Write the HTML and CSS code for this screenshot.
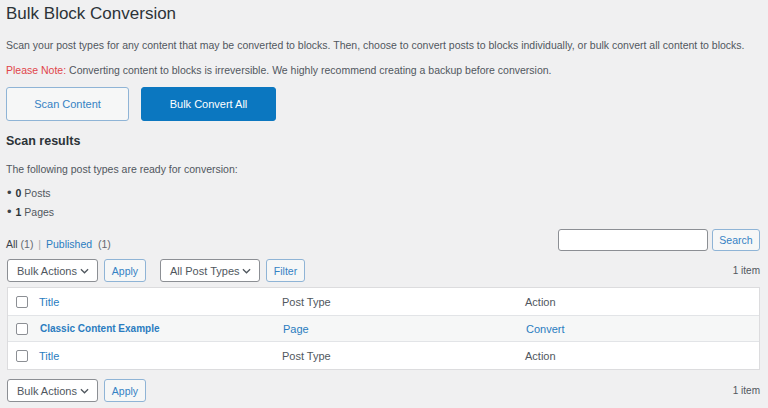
FILE: index.html
```html
<!DOCTYPE html>
<html>
<head>
<meta charset="utf-8">
<link rel="stylesheet" href="styles.css">
</head>
<body>
<div class="wrap">
  <h1 class="title">Bulk Block Conversion</h1>
  <p class="intro">Scan your post types for any content that may be converted to blocks. Then, choose to convert posts to blocks individually, or bulk convert all content to blocks.</p>
  <p class="intro note"><span class="warn">Please Note:</span> Converting content to blocks is irreversible. We highly recommend creating a backup before conversion.</p>
  <div class="actions">
    <button class="btn btn-secondary">Scan Content</button>
    <button class="btn btn-primary">Bulk Convert All</button>
  </div>
  <h2 class="subtitle">Scan results</h2>
  <p class="small">The following post types are ready for conversion:</p>
  <ul class="counts">
    <li><b>0</b> Posts</li>
    <li><b>1</b> Pages</li>
  </ul>
  <div class="filters-row">
    <div class="subsubsub"><span class="current">All</span> <span class="count">(1)</span> <span class="sep">|</span> <a class="link">Published</a>&nbsp; <span class="count">(1)</span></div>
    <div class="search">
      <span class="search-input"></span>
      <button class="small-btn search-btn">Search</button>
    </div>
  </div>
  <div class="tablenav top">
    <div class="tn-left">
      <span class="select w-bulk">Bulk Actions <svg class="chev" viewBox="0 0 10 6" width="9" height="6"><path d="M1 1l4 4 4-4" fill="none" stroke="#50575e" stroke-width="1.4"/></svg></span>
      <button class="small-btn w-apply">Apply</button>
      <span class="select w-types">All Post Types <svg class="chev" viewBox="0 0 10 6" width="9" height="6"><path d="M1 1l4 4 4-4" fill="none" stroke="#50575e" stroke-width="1.4"/></svg></span>
      <button class="small-btn w-filter">Filter</button>
    </div>
    <span class="items">1 item</span>
  </div>
  <div class="table">
    <div class="row head">
      <span class="cb"><span class="box"></span></span>
      <span class="c-title link">Title</span>
      <span class="c-type">Post Type</span>
      <span class="c-action">Action</span>
    </div>
    <div class="row alt">
      <span class="cb"><span class="box"></span></span>
      <span class="c-title link strong">Classic Content Example</span>
      <span class="c-type link">Page</span>
      <span class="c-action link">Convert</span>
    </div>
    <div class="row foot">
      <span class="cb"><span class="box"></span></span>
      <span class="c-title link">Title</span>
      <span class="c-type">Post Type</span>
      <span class="c-action">Action</span>
    </div>
  </div>
  <div class="tablenav bottom">
    <div class="tn-left">
      <span class="select w-bulk">Bulk Actions <svg class="chev" viewBox="0 0 10 6" width="9" height="6"><path d="M1 1l4 4 4-4" fill="none" stroke="#50575e" stroke-width="1.4"/></svg></span>
      <button class="small-btn w-apply">Apply</button>
    </div>
    <span class="items">1 item</span>
  </div>
</div>
</body>
</html>
```
FILE: styles.css
```css
html, body {
  margin: 0;
  padding: 0;
  background: #f0f0f1;
}
body {
  font-family: "Liberation Sans", Arial, sans-serif;
  color: #50575e;
  width: 768px;
  height: 408px;
  overflow: hidden;
}
.wrap {
  padding: 3px 8px 0 6px;
}
.title {
  margin: 0;
  font-size: 17px;
  font-weight: 400;
  line-height: 22px;
  color: #2c3338;
}
.intro {
  margin: 13px 0 0;
  font-size: 10.5px;
  line-height: 15px;
  color: #50575e;
}
.note {
  margin-top: 10px;
}
.warn {
  color: #e0454a;
}
.actions {
  display: flex;
  gap: 12px;
  margin-top: 9px;
}
.btn {
  font-family: inherit;
  height: 34px;
  border-radius: 3px;
  font-size: 11px;
  padding: 0;
  cursor: pointer;
}
.btn-secondary {
  width: 123px;
  background: #f6f7f7;
  border: 1px solid #8fb4d6;
  color: #3582c4;
}
.btn-primary {
  width: 135px;
  background: #0b77c0;
  border: 1px solid #0b77c0;
  color: #fff;
}
.subtitle {
  margin: 11px 0 0;
  font-size: 12.5px;
  font-weight: 700;
  line-height: 18px;
  color: #2c3338;
}
.small {
  margin: 12px 0 0;
  font-size: 10.5px;
  line-height: 14px;
}
.counts {
  list-style: none;
  margin: 10px 0 0;
  padding: 0;
  font-size: 10.5px;
  line-height: 14px;
}
.counts li {
  margin-bottom: 5px;
}
.counts li:last-child {
  margin-bottom: 0;
}
.counts li::before {
  content: "\2022";
  margin: 0 4px 0 1px;
  font-size: 13px;
  color: #3c434a;
}
.counts b {
  color: #2c3338;
}
.filters-row {
  display: flex;
  justify-content: space-between;
  align-items: flex-end;
  margin-top: 10px;
}
.subsubsub {
  font-size: 10.5px;
  line-height: 14px;
  color: #646970;
}
.subsubsub .current {
  color: #3c434a;
}
.subsubsub .sep {
  color: #a7aaad;
  margin: 0 2px;
}
.link {
  color: #2a7cc0;
}
.search {
  display: flex;
  gap: 4px;
}
.search-input {
  display: block;
  width: 148px;
  height: 20px;
  background: #fff;
  border: 1px solid #8c8f94;
  border-radius: 3px;
}
.small-btn {
  font-family: inherit;
  font-size: 10.5px;
  height: 23px;
  padding: 0 7px;
  background: #f6f7f7;
  border: 1px solid #8fb4d6;
  border-radius: 3px;
  color: #3582c4;
}
.search-btn {
  height: 22px;
  width: 48px;
  padding: 0;
}
.tablenav {
  display: flex;
  justify-content: space-between;
  align-items: center;
  height: 23px;
}
.tablenav.top {
  margin-top: 8px;
  padding-left: 1px;
}
.tablenav.bottom {
  margin-top: 9px;
  padding-left: 1px;
}
.tn-left {
  display: flex;
  align-items: center;
}
.select {
  box-sizing: border-box;
  display: flex;
  align-items: center;
  justify-content: space-between;
  height: 23px;
  padding: 0 8px 0 9px;
  font-size: 11px;
  color: #50575e;
  background: #fff;
  border: 1px solid #8c8f94;
  border-radius: 3px;
}
.w-bulk { width: 91px; }
.w-types { width: 100px; margin-left: 14px; }
.w-apply { width: 42px; margin-left: 6px; padding: 0; }
.w-filter { width: 39px; margin-left: 6px; padding: 0; }
.items {
  font-size: 10px;
  color: #50575e;
}
.table {
  margin: 5px 0 0 1px;
  background: #fff;
  border: 1px solid #dcdcde;
}
.row {
  box-sizing: border-box;
  display: flex;
  align-items: center;
  height: 27px;
  font-size: 11px;
  color: #50575e;
}
.row.alt {
  background: #f6f7f7;
  border-top: 1px solid #e2e4e7;
  border-bottom: 1px solid #e2e4e7;
}
.cb {
  width: 31px;
  padding-left: 8px;
  box-sizing: border-box;
  display: flex;
}
.box {
  display: block;
  width: 10px;
  height: 10px;
  border: 1px solid #8c8f94;
  border-radius: 2px;
  background: #fff;
}
.c-title { width: 243px; }
.c-type { width: 243px; }
.c-action { flex: 1; }
.strong {
  font-weight: 700;
  font-size: 10px;
  padding-left: 1px;
}
```
